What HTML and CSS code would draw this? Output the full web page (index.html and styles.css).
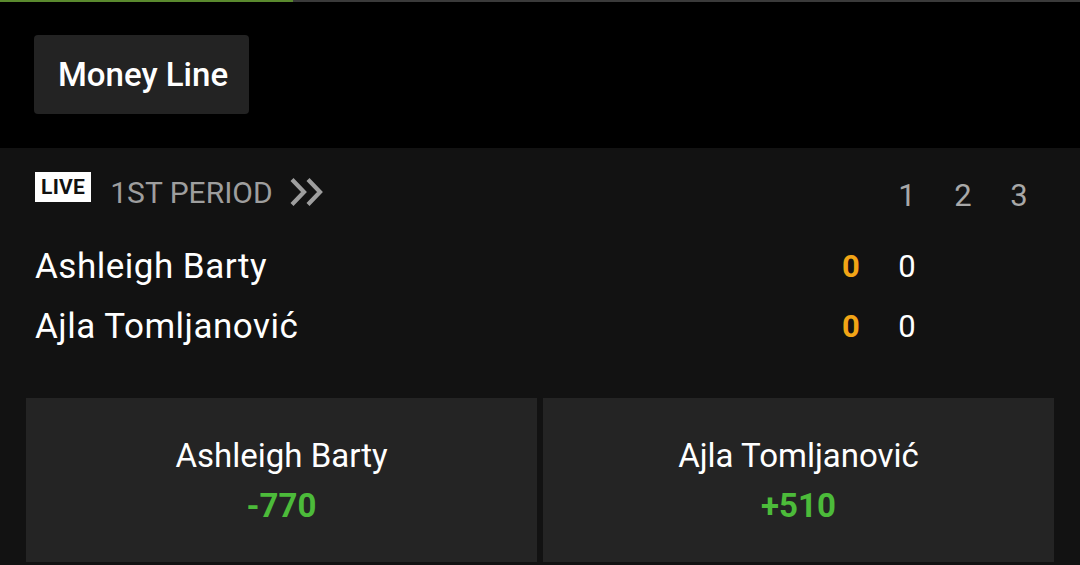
FILE: index.html
```html
<!DOCTYPE html>
<html>
  <head>
    <meta charset="utf-8" />
    <title>Money Line</title>
    <link rel="stylesheet" href="styles.css">
  </head>
  <body>
    <div class="progress"><div class="progress-fill"></div></div>
    <div class="header">
      <button class="tab">Money Line</button>
    </div>
    <div class="event">
      <div class="row status-row">
        <div class="status">
          <span class="live">LIVE</span>
          <span class="period">1ST PERIOD</span>
          <svg class="chevrons" width="36" height="30" viewBox="0 0 36 30">
            <path d="M3 2.5 L15 15 L3 27.5 M19 2.5 L31 15 L19 27.5" fill="none" stroke="#9e9e9e" stroke-width="4.2" />
          </svg>
        </div>
        <div class="sets">
          <span class="set head">1</span>
          <span class="set head">2</span>
          <span class="set head">3</span>
        </div>
      </div>
      <div class="row player-row">
        <div class="player">Ashleigh Barty</div>
        <div class="sets">
          <span class="set game">0</span>
          <span class="set">0</span>
          <span class="set"></span>
          <span class="set"></span>
        </div>
      </div>
      <div class="row player-row">
        <div class="player">Ajla Tomljanović</div>
        <div class="sets">
          <span class="set game">0</span>
          <span class="set">0</span>
          <span class="set"></span>
          <span class="set"></span>
        </div>
      </div>
      <div class="odds">
        <div class="odd">
          <div class="odd-name">Ashleigh Barty</div>
          <div class="odd-price">-770</div>
        </div>
        <div class="odd">
          <div class="odd-name">Ajla Tomljanović</div>
          <div class="odd-price">+510</div>
        </div>
      </div>
    </div>
  </body>
</html>
```

FILE: styles.css
```css
html, body {
  margin:0;
  padding:0;
  background-color:#121212;
  height:100%;
  font-family:Roboto, "Liberation Sans", sans-serif;
  color:#fff;
  overflow:hidden;
}

.progress {
  height:2px;
  background-color:#3a3a3a;
}

.progress-fill {
  width:293px;
  height:100%;
  background-color:#5a8a2e;
}

.header {
  background-color:#000;
  height:146px;
  padding:33px 0 0 34px;
  box-sizing:border-box;
}

.tab {
  height:79px;
  padding:0 21px 0 24px;
  border:none;
  border-radius:4px;
  background-color:#232323;
  color:#fff;
  font-family:Roboto, sans-serif;
  font-size:33px;
  font-weight:500;
}

.event {
  padding:18px 26px 0 26px;
}

.row {
  display:flex;
  align-items:center;
  justify-content:space-between;
  padding:0 7px 0 9px;
}

.status {
  display:flex;
  align-items:center;
}

.live {
  background-color:#fff;
  color:#111;
  font-weight:700;
  font-size:21px;
  line-height:30px;
  padding:0 6px;
  letter-spacing:0.3px;
}

.period {
  color:#9e9e9e;
  font-size:30px;
  margin-left:19px;
  padding-top:10px;
}

.chevrons {
  margin-left:16px;
  padding-top:10px;
}

.sets {
  display:flex;
}

.set {
  width:56px;
  text-align:center;
  font-size:31px;
}

.status-row {
  height:42px;
  margin-bottom:28px;
}

.status-row .sets {
  padding-top:16px;
}

.set.head {
  color:#a8a8a8;
}

.set.game {
  color:#f2a516;
  font-weight:700;
}

.player-row {
  height:60px;
}

.player {
  font-size:35px;
  letter-spacing:0.5px;
}

.odds {
  display:grid;
  grid-template-columns:1fr 1fr;
  gap:6px;
  margin-top:42px;
}

.odd {
  background-color:#242424;
  height:164px;
  display:flex;
  flex-direction:column;
  align-items:center;
  justify-content:center;
  padding-top:4px;
  box-sizing:border-box;
}

.odd-name {
  font-size:33px;
  line-height:40px;
}

.odd-price {
  color:#4cbb3a;
  font-size:33px;
  font-weight:700;
  line-height:44px;
  margin-top:8px;
}
```
